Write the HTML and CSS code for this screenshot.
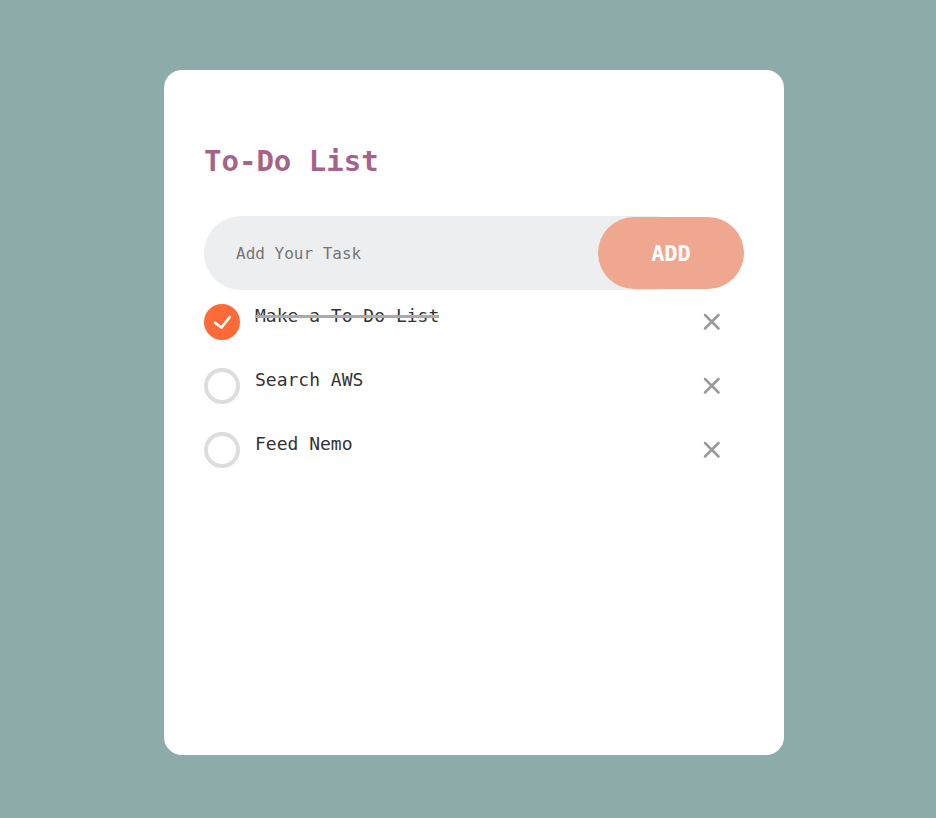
FILE: index.html
```
<!DOCTYPE html>
<html lang="en">
<head>
<meta charset="utf-8">
<meta name="viewport" content="width=device-width, initial-scale=1">
<title>To-Do List</title>
<link rel="stylesheet" href="styles.css">
</head>
<body>
<main class="card">
  <h1 class="title">To-Do List</h1>
  <form class="entry">
    <input class="entry-input" type="text" placeholder="Add Your Task" aria-label="Add Your Task">
    <button class="entry-button" type="button">ADD</button>
  </form>
  <ul class="tasks">
    <li class="task">
      <span class="tick">
        <input class="tick-box" type="checkbox" id="task-1" checked>
        <svg class="tick-mark" viewBox="0 0 36 36" aria-hidden="true"><path d="M11 18.8L17.4 23.6L25.8 13"/></svg>
      </span>
      <label class="task-name" for="task-1">Make a To Do List</label>
      <button class="remove" type="button" aria-label="Remove Make a To Do List"><svg class="cross" viewBox="0 0 18 18" aria-hidden="true"><path d="M2 2L15.5 15.5M15.5 2L2 15.5"/></svg></button>
    </li>
    <li class="task">
      <span class="tick">
        <input class="tick-box" type="checkbox" id="task-2">
        <svg class="tick-mark" viewBox="0 0 36 36" aria-hidden="true"><path d="M11 18.8L17.4 23.6L25.8 13"/></svg>
      </span>
      <label class="task-name" for="task-2">Search AWS</label>
      <button class="remove" type="button" aria-label="Remove Search AWS"><svg class="cross" viewBox="0 0 18 18" aria-hidden="true"><path d="M2 2L15.5 15.5M15.5 2L2 15.5"/></svg></button>
    </li>
    <li class="task">
      <span class="tick">
        <input class="tick-box" type="checkbox" id="task-3">
        <svg class="tick-mark" viewBox="0 0 36 36" aria-hidden="true"><path d="M11 18.8L17.4 23.6L25.8 13"/></svg>
      </span>
      <label class="task-name" for="task-3">Feed Nemo</label>
      <button class="remove" type="button" aria-label="Remove Feed Nemo"><svg class="cross" viewBox="0 0 18 18" aria-hidden="true"><path d="M2 2L15.5 15.5M15.5 2L2 15.5"/></svg></button>
    </li>
  </ul>
</main>
</body>
</html>
```
FILE: styles.css
```
* {
  box-sizing: border-box;
}

body {
  margin: 0;
  min-height: 100vh;
  padding: 70px 0 63px 12px;
  display: flex;
  justify-content: center;
  background: #8daba8;
  font-family: Consolas, "DejaVu Sans Mono", monospace;
}

.card {
  width: 100%;
  max-width: 620px;
  padding: 72px 40px 40px;
  border-radius: 18px;
  background: #fff;
}

.title {
  margin: 0 0 36px;
  font-size: 29px;
  line-height: 38px;
  color: #a6638a;
}

.entry {
  display: flex;
  align-items: center;
}

.entry-input {
  flex: 1;
  min-width: 0;
  height: 74px;
  margin-right: -94px;
  padding: 0 126px 0 32px;
  border: 0;
  border-radius: 37px;
  background: #edeef0;
  font: inherit;
  font-size: 16px;
  color: #333;
}

.entry-input::placeholder {
  color: #757575;
}

.entry-button {
  position: relative;
  flex: none;
  width: 146px;
  height: 72px;
  padding: 0;
  border: 0;
  border-radius: 36px;
  background: #efa88f;
  font: inherit;
  font-size: 22px;
  font-weight: bold;
  color: #fff;
}

.tasks {
  margin: 14px 0 0;
  padding: 0;
  list-style: none;
}

.task {
  display: flex;
  align-items: flex-start;
  height: 64px;
}

.tick {
  display: grid;
  flex: none;
  width: 36px;
  height: 36px;
}

.tick-box,
.tick-mark {
  grid-area: 1 / 1;
  width: 36px;
  height: 36px;
  margin: 0;
}

.tick-box {
  appearance: none;
  border: 4px solid #ddd;
  border-radius: 50%;
}

.tick-box:checked {
  border: 0;
  background: #ff6a38;
}

.tick-mark {
  display: none;
  pointer-events: none;
  fill: none;
  stroke: #fff;
  stroke-width: 2.5;
  stroke-linecap: round;
  stroke-linejoin: round;
}

.tick-box:checked + .tick-mark {
  display: block;
}

.task-name {
  position: relative;
  margin-left: 15px;
  font-size: 18px;
  line-height: 24px;
  color: #333;
}

.tick:has(:checked) + .task-name::after {
  content: "";
  position: absolute;
  inset: 11px 0 auto;
  height: 3px;
  background: #aaa;
}

.remove {
  display: grid;
  place-items: center;
  flex: none;
  width: 36px;
  height: 36px;
  margin: 0 14px 0 auto;
  padding: 0;
  border: 0;
  background: none;
}

.cross {
  width: 18px;
  height: 18px;
  fill: none;
  stroke: #999;
  stroke-width: 2.5;
  stroke-linecap: round;
}
```
